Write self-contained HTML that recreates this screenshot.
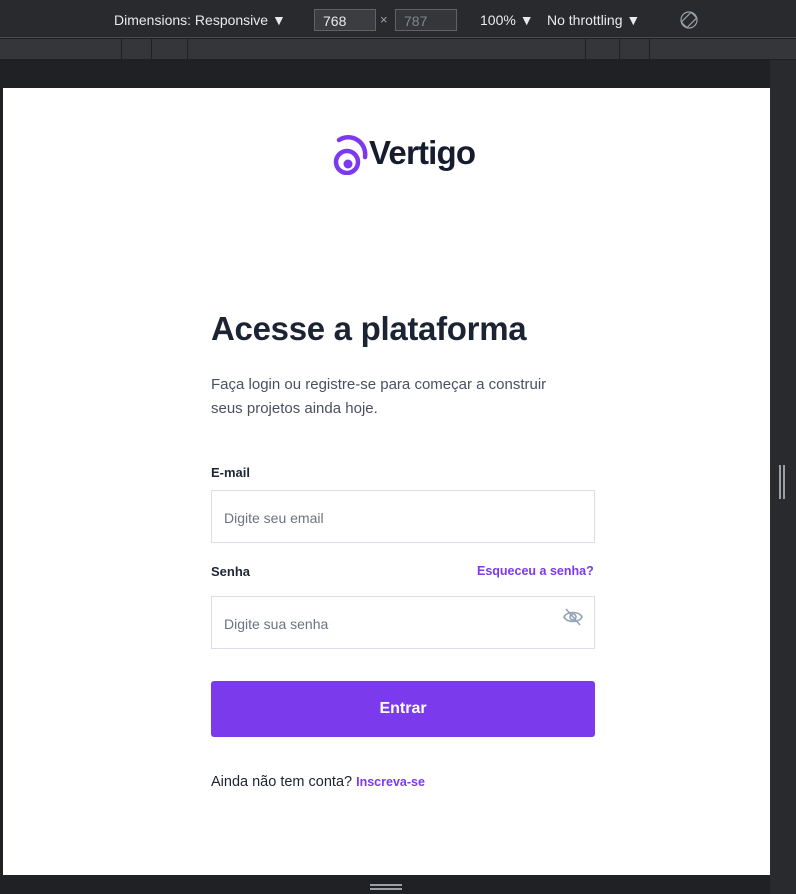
<!DOCTYPE html>
<html><head><meta charset="utf-8"><style>
*{margin:0;padding:0;box-sizing:border-box}
body{width:796px;height:894px;background:#202124;position:relative;overflow:hidden;font-family:"Liberation Sans",sans-serif}
.top{position:absolute;left:0;top:0;width:796px;height:38px;background:#292a2d;border-bottom:1px solid #4a4b4e;color:#e8eaed;font-size:14px}
.top span{position:absolute;top:12px}
.box{position:absolute;top:9px;height:22px;border:1px solid #5f6368;background:#3c3d40;font-size:14px;padding:3px 8px}
.ruler{position:absolute;left:0;top:39px;width:796px;height:20px;background:#35363a}
.ruler i{position:absolute;top:0;width:1px;height:20px;background:#202124}
.page{position:absolute;left:3px;top:88px;width:767px;height:787px;background:#fff}
.side{position:absolute;left:770px;top:60px;width:26px;height:834px;background:#292a2d}
.t{position:absolute;color:#1e2535}
h1{position:absolute;left:208px;top:222px;font-size:33px;font-weight:bold;color:#1c2333;letter-spacing:-0.3px;white-space:nowrap}
p.d{position:absolute;left:208px;top:285px;font-size:15px;line-height:24px;color:#4a5061;white-space:nowrap}
.lbl{position:absolute;font-size:13px;font-weight:bold;color:#1e2535}
.inp{position:absolute;left:208px;width:384px;height:53px;border:1px solid #d9dee8;font-size:14px;color:#6b7280;padding:19px 12px}
.btn{position:absolute;left:208px;top:593px;width:384px;height:56px;background:#7c3aed;border-radius:3px;color:#fff;font-weight:bold;font-size:16px;text-align:center;line-height:56px}
.pur{color:#7c3aed;font-weight:bold}
</style></head><body>
<div class="top">
<span style="left:114px">Dimensions: Responsive ▼</span>
<div class="box" style="left:314px;width:62px;color:#e8eaed">768</div>
<span style="left:380px;color:#9aa0a6;font-size:13px">×</span>
<div class="box" style="left:395px;width:62px;color:#80868b;background:#35363a">787</div>
<span style="left:480px">100% ▼</span>
<span style="left:547px">No throttling ▼</span>
<svg style="position:absolute;left:680px;top:11px" width="18" height="18" viewBox="0 0 18 18" fill="none" stroke="#9aa0a6" stroke-width="1.2"><rect x="5" y="2" width="8" height="14" rx="1.5" transform="rotate(45 9 9)"/><circle cx="9" cy="9" r="8"/></svg>
</div>
<div class="ruler"><i style="left:121px"></i><i style="left:151px"></i><i style="left:187px"></i><i style="left:585px"></i><i style="left:619px"></i><i style="left:649px"></i></div>
<div class="side"><div style="position:absolute;left:9px;top:405px;width:2px;height:34px;background:#9aa0a6"></div><div style="position:absolute;left:13px;top:405px;width:2px;height:34px;background:#9aa0a6"></div></div>
<div style="position:absolute;left:370px;top:884px;width:32px;height:2px;background:#9aa0a6"></div>
<div style="position:absolute;left:370px;top:888px;width:32px;height:2px;background:#9aa0a6"></div>
<div class="page">
<svg style="position:absolute;left:327px;top:45px" width="38" height="42" viewBox="0 0 38 42" fill="none" stroke="#7c3aed" stroke-width="4.5" stroke-linecap="round">
<path d="M9 7 A17 17 0 0 1 35 24"/>
<circle cx="17" cy="29" r="11"/>
<circle cx="18" cy="31" r="4.5" fill="#7c3aed" stroke="none"/>
</svg>
<div class="t" style="left:366px;top:46px;font-size:33px;font-weight:bold;letter-spacing:-0.8px;color:#161c2d">Vertigo</div>
<h1>Acesse a plataforma</h1>
<p class="d">Faça login ou registre-se para começar a construir<br>seus projetos ainda hoje.</p>
<div class="lbl" style="left:208px;top:377px">E-mail</div>
<div class="inp" style="top:402px">Digite seu email</div>
<div class="lbl" style="left:208px;top:476px">Senha</div>
<div class="lbl pur" style="left:474px;top:476px;font-size:12.5px">Esqueceu a senha?</div>
<div class="inp" style="top:508px">Digite sua senha</div>
<svg style="position:absolute;left:559px;top:518px" width="22" height="22" viewBox="0 0 22 22" fill="none" stroke="#94a3b8" stroke-width="1.6"><path d="M2 11 C5 5 17 5 20 11 C17 17 5 17 2 11Z"/><circle cx="11" cy="11" r="3"/><path d="M4 3 L18 19"/></svg>
<div class="btn">Entrar</div>
<div class="t" style="left:208px;top:686px;font-size:14.5px;color:#1c2333">Ainda não tem conta? <span class="pur" style="font-size:12.5px">Inscreva-se</span></div>
</div>
</body></html>
